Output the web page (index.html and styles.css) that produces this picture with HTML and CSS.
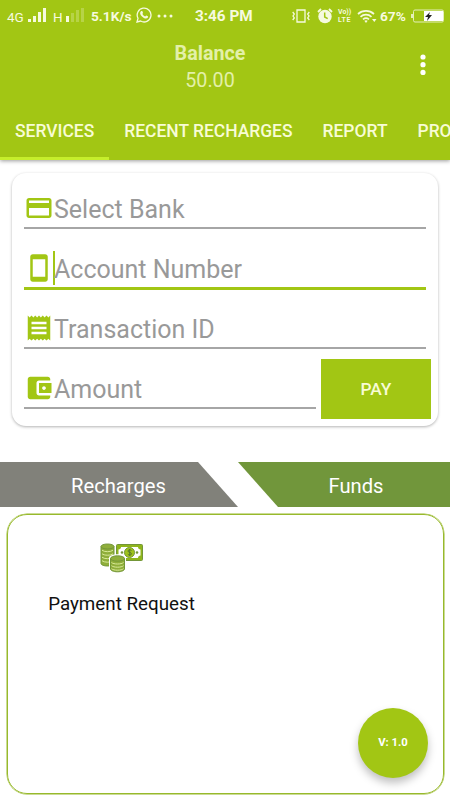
FILE: index.html
```html
<!DOCTYPE html>
<html lang="en">
<head>
    <meta charset="UTF-8">
    <meta name="viewport" content="width=device-width, initial-scale=1.0">
    <title>Services</title>
    <link rel="stylesheet" href="styles.css">
</head>
<body>

    <header class="header">
        <div class="status">
            <span class="net net-4g">4G</span>
            <svg class="bars" width="19" height="14" viewBox="0 0 19 14" fill="currentColor"><path d="M0 11h3v3H0zM5 8h3v6H5zM10 4h3v10h-3zM15 0h3v14h-3z"/></svg>
            <span class="net net-h">H</span>
            <svg class="bars" width="19" height="14" viewBox="0 0 19 14" fill="currentColor"><path d="M0 8h3v6H0z"/><path opacity=".25" d="M5 5h3v9H5zM10 2h3v12h-3zM15 0h3v14h-3z"/></svg>
            <span class="speed">5.1K/s</span>
            <svg class="whatsapp" width="16" height="16" viewBox="0 0 16 16" fill="none" stroke="currentColor" stroke-width="1.3"><path d="M1 15l1-3.7A6.9 6.9 0 1 1 4.600 14z"/><path fill="currentColor" stroke="none" d="M5 4.300c.5-.5 1.200-.5 1.400 0l.6 1.400c.1.500-.6 1-.6 1.300.6 1.200 1.500 2 2.700 2.500.4 0 .8-1 1.300-.9l1.400.7c.5.300.2 1.300-.3 1.700-1 .8-2.400.5-3.600-.1C6 9.900 4.600 8.300 4.200 6.800 4 5.900 4.300 5 5 4.300z"/></svg>
            <svg class="more" width="16" height="4" viewBox="0 0 16 4" fill="currentColor"><circle cx="2" cy="2" r="1.500"/><circle cx="8" cy="2" r="1.500"/><circle cx="14" cy="2" r="1.500"/></svg>
            <span class="time">3:46 PM</span>
            <svg class="vibrate" width="18" height="14" viewBox="0 0 18 14" fill="none" stroke="currentColor" stroke-width="1.300"><path d="M5 1h8v12H5zM.7 3l1.600 2L1 7l1.300 2-1.600 2M17.300 3l-1.600 2L17 7l-1.300 2 1.600 2"/></svg>
            <svg class="alarm" width="16" height="16" viewBox="0 0 16 16" fill="currentColor"><circle cx="8" cy="8.500" r="6.700"/><path d="M1 4l3-3M15 4l-3-3" stroke="currentColor" stroke-width="1.800"/><path d="M7.700 4.500V9l3 1.600" fill="none" stroke="#a2c614" stroke-width="1.500"/></svg>
            <span class="volte"><span>Vo))</span><span class="lte">LTE</span></span>
            <svg class="wifi" width="20" height="14" viewBox="0 0 20 14" fill="none" stroke="currentColor" stroke-width="1.700"><path d="M1 5a12 12 0 0 1 16 0M3.500 7.800a8.200 8.200 0 0 1 11 0M6 10.300a4.700 4.700 0 0 1 6 0"/><path d="M7.300 11.800L9 14l1.700-2.200a3 3 0 0 0-3.400 0zM15 10h4.500l-2.200 3z" fill="currentColor" stroke="none"/></svg>
            <span class="percent">67%</span>
            <svg class="battery" width="34" height="14" viewBox="0 0 34 14"><rect x="2.500" y="1" width="30" height="12" rx="1.500" fill="none" stroke="#e4efb8"/><path d="M0 5h2v4H0z" fill="#e4efb8"/><path d="M13 2h19v10H13z" fill="#fff"/><path d="M19 3l-5 5h3l-1 4 5-6h-3z" fill="#222"/></svg>
        </div>

        <div class="toolbar">
            <div class="balance">
                <b>Balance</b>
                <span>50.00</span>
            </div>
            <svg class="menu" width="6" height="22" viewBox="0 0 6 22" fill="#fff"><circle cx="3" cy="3" r="2.600"/><circle cx="3" cy="10.700" r="2.600"/><circle cx="3" cy="18.400" r="2.600"/></svg>
        </div>

        <nav class="tabs">
            <a class="tab active">SERVICES</a>
            <a class="tab">RECENT RECHARGES</a>
            <a class="tab">REPORT</a>
            <a class="tab">PROFILE</a>
        </nav>
    </header>

    <form class="card">
        <div class="field">
            <svg width="30" height="30" viewBox="0 0 24 24"><path d="M20 4H4c-1.110 0-2 .89-2 2v12c0 1.110.89 2 2 2h16c1.110 0 2-.89 2-2V6c0-1.110-.89-2-2-2zm0 14H4v-6h16v6zm0-10H4V6h16v2z"/></svg>
            <span>Select Bank</span>
        </div>
        <div class="field focus">
            <svg width="30" height="30" viewBox="0 0 24 24"><path d="M17 1H7c-1.100 0-2 .9-2 2v18c0 1.100.9 2 2 2h10c1.100 0 2-.9 2-2V3c0-1.100-.9-2-2-2zm0 18H7V5h10v14z"/></svg>
            <span>Account Number</span>
        </div>
        <div class="field">
            <svg width="30" height="30" viewBox="0 0 24 24"><path d="M18 17H6v-2h12v2zm0-4H6v-2h12v2zm0-4H6V7h12v2zM3 22l1.500-1.500L6 22l1.500-1.500L9 22l1.500-1.500L12 22l1.500-1.500L15 22l1.500-1.500L18 22l1.500-1.500L21 22V2l-1.500 1.500L18 2l-1.500 1.500L15 2l-1.500 1.500L12 2l-1.500 1.500L9 2 7.500 3.500 6 2 4.500 3.500 3 2v20z"/></svg>
            <span>Transaction ID</span>
        </div>
        <div class="pay-row">
            <div class="field">
                <svg width="30" height="30" viewBox="0 0 24 24"><path d="M21 18v1c0 1.100-.9 2-2 2H5c-1.110 0-2-.9-2-2V5c0-1.100.89-2 2-2h14c1.100 0 2 .9 2 2v1h-9c-1.110 0-2 .9-2 2v8c0 1.100.89 2 2 2h9zm-9-2h10V8H12v8zm4-2.500c-.83 0-1.500-.67-1.500-1.500s.67-1.500 1.500-1.500 1.500.67 1.500 1.500-.67 1.500-1.500 1.500z"/></svg>
                <span>Amount</span>
            </div>
            <button type="button" class="btn">PAY</button>
        </div>
    </form>

    <div class="switch">
        <div class="recharges">Recharges</div>
        <div class="funds">Funds</div>
    </div>

    <section class="panel">
        <div class="item">
            <svg width="44" height="30" viewBox="0 0 44 30">
                <rect x="16.500" y="1.500" width="26" height="16" rx="1" fill="#8fb51c" stroke="#739638"/>
                <path d="M21 4h17c0 1.500 1 2.500 2.500 2.500v6C39 12.500 38 13.500 38 15H21c0-1.500-1-2.500-2.500-2.500v-6C20 6.500 21 5.500 21 4z" fill="#fff"/>
                <circle cx="29.500" cy="9.500" r="5" fill="#9fc31c" stroke="#739638"/>
                <circle cx="22" cy="9.500" r="1.300" fill="#739638"/>
                <circle cx="37" cy="9.500" r="1.300" fill="#739638"/>
                <path d="M31.500 7.500c-1-1-3.500-1-3.500.6 0 1.700 3.500 1 3.500 2.700 0 1.600-2.600 1.600-3.700.5M29.700 6v7" fill="none" stroke="#4f7030" stroke-width=".9"/>
                <g class="coins">
                    <path d="M1 3.500v17c0 1.400 3 2.500 6.500 2.500s6.500-1.100 6.500-2.500v-17"/>
                    <ellipse cx="7.500" cy="3.500" rx="6.500" ry="2.500"/>
                    <path d="M2 7.200c2 2 9 2 11 0M2 10.700c2 2 9 2 11 0M2 14.200c2 2 9 2 11 0M2 17.700c2 2 9 2 11 0" class="shine"/>
                </g>
                <path d="M9 15c0-5 17-5 17 0v15H9z" fill="#fff"/>
                <g class="coins">
                    <path d="M10.500 15.500V26c0 1.500 3 2.800 7 2.800s7-1.300 7-2.800V15.500"/>
                    <ellipse cx="17.500" cy="15.500" rx="7" ry="2.700"/>
                    <path d="M11.500 19.500c2 2 10 2 12 0M11.500 22.700c2 2 10 2 12 0M11.500 25.700c2 2 10 2 12 0" class="shine"/>
                </g>
            </svg>
            <p>Payment Request</p>
        </div>
        <div class="version">V: 1.0</div>
    </section>

</body>
</html>
```

FILE: styles.css
```css
*{
    margin: 0;
    padding: 0;
    box-sizing: border-box;
}
body{
    width: 450px;
    height: 800px;
    overflow: hidden;
    background-color: #fff;
    font-family: Roboto, "Liberation Sans", sans-serif;
}
svg{
    display: block;
    flex-shrink: 0;
}
.header{
    height: 160px;
    background-color: #a2c614;
    box-shadow: 0 1px 4px rgba(0,0,0,.4);
}

/* status bar */
.status{
    display: flex;
    align-items: center;
    height: 32px;
    padding-left: 7px;
    color: #f6fadf;
    white-space: nowrap;
}
.status span{
    flex-shrink: 0;
}
.net{
    font-size: 13.5px;
    padding-top: 1px;
}
.net-4g{
    width: 21px;
}
.net-h{
    width: 13px;
}
.bars{
    margin-right: 6px;
    margin-bottom: 2px;
}
.speed{
    width: 44px;
    margin-right: 1px;
    font-size: 13.7px;
    font-weight: 700;
}
.whatsapp{
    margin-right: 5px;
    margin-bottom: 2px;
}
.more{
    margin-right: 22px;
}
.time{
    width: 97px;
    font-size: 15.3px;
    font-weight: 700;
}
.vibrate{
    margin-right: 7px;
}
.alarm{
    margin-right: 5px;
}
.volte{
    display: flex;
    flex-direction: column;
    width: 19px;
    font-size: 7px;
    line-height: 8px;
    font-weight: 700;
}
.lte{
    letter-spacing: .6px;
}
.wifi{
    margin-right: 3px;
}
.percent{
    width: 31px;
    font-size: 13.7px;
    font-weight: 700;
}

/* balance */
.toolbar{
    display: flex;
    justify-content: flex-end;
    height: 70px;
    padding-right: 24px;
}
.balance{
    display: flex;
    flex-direction: column;
    align-items: center;
    width: 100px;
    margin-right: 160px;
    padding-top: 8px;
    font-size: 19.7px;
    line-height: 27px;
    color: #e3f0a9;
}
.balance b{
    font-weight: 700;
}
.menu{
    margin-top: 22px;
}

.tabs{
    display: flex;
    height: 58px;
    overflow: hidden;
}
.tab{
    flex-shrink: 0;
    padding: 0 15px;
    font-size: 17.45px;
    font-weight: 500;
    line-height: 58px;
    color: #f8fcd5;
}
.tab.active{
    border-bottom: 3px solid #c6ee2c;
}

/* form */
.card{
    width: 426px;
    height: 253px;
    margin: 13px 12px 0;
    padding: 7px 12px;
    border-radius: 14px;
    box-shadow: 0 1px 3px rgba(0,0,0,.3);
}
.field{
    display: flex;
    align-items: center;
    width: 402px;
    height: 49px;
    margin-bottom: 11px;
    padding-top: 9px;
    border-bottom: 2px solid #a6a6a6;
    font-size: 25px;
    color: #999;
}
.field span{
    padding-top: 2px;
}
.field svg{
    fill: #a2c614;
}
.field.focus{
    height: 50px;
    margin-bottom: 10px;
    border-bottom: 3px solid #a2c614;
}
.focus span{
    height: 34px;
    line-height: 34px;
    box-shadow: -1px 0 #a2c614, inset 1px 0 #a2c614;
}
.pay-row{
    display: flex;
    gap: 5px;
}
.pay-row .field{
    width: 292px;
    flex-shrink: 0;
}
.btn{
    flex-shrink: 0;
    width: 110px;
    height: 60px;
    margin-top: -1px;
    border: none;
    background-color: #a2c614;
    font-family: inherit;
    font-size: 17.4px;
    font-weight: 500;
    color: #f8fcd5;
}

/* recharges / funds */
.switch{
    display: flex;
    height: 45px;
    margin-top: 36px;
    font-size: 20.2px;
    line-height: 48px;
    text-align: center;
    color: #fff;
}
.recharges{
    width: 238px;
    padding-right: 1px;
    background-color: #81817a;
    clip-path: polygon(0 0, 198px 0, 100% 100%, 0 100%);
}
.funds{
    width: 212px;
    padding-left: 24px;
    background-color: #71963b;
    clip-path: polygon(0 0, 100% 0, 100% 100%, 40px 100%);
}

.panel{
    display: flex;
    flex-direction: column;
    justify-content: space-between;
    width: 437px;
    height: 280px;
    margin: 7px 0 0 7px;
    padding: 28px 15px 15px 41px;
    border: 1px solid #98b92c;
    border-radius: 20px;
    box-shadow: 0 0 0 .5px #98b92c;
}
.item{
    display: flex;
    flex-direction: column;
    align-items: center;
    width: 145px;
    font-size: 18.8px;
    color: #111;
    white-space: nowrap;
}
.item p{
    margin-top: 19px;
    line-height: 24px;
}
.coins{
    fill: #8fae3a;
    stroke: #739638;
}
.coins .shine{
    fill: none;
    stroke: #d9ea9a;
}
.version{
    align-self: flex-end;
    width: 70px;
    height: 70px;
    border-radius: 50%;
    background-color: #a2c614;
    box-shadow: 0 5px 9px rgba(0,0,0,.25);
    font-size: 11.3px;
    font-weight: 700;
    line-height: 70px;
    text-align: center;
    color: #fff;
}
```
